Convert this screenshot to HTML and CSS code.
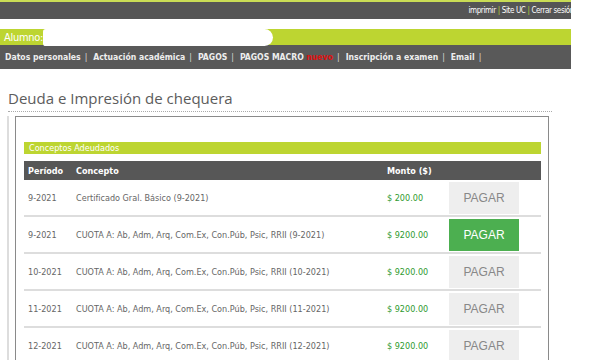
FILE: index.html
```html
<!DOCTYPE html>
<html lang="es">
<head>
<meta charset="utf-8">
<title>Deuda e Impresión de chequera</title>
<link rel="stylesheet" href="styles.css">
</head>
<body>
<div class="page">
  <div class="topbar">
    <a href="#">imprimir</a><span class="sep">|</span><a href="#">Site UC</a><span class="sep">|</span><a href="#">Cerrar sesión</a>
  </div>
  <div class="student">
    <span class="lbl">Alumno:</span><span class="name"></span>
  </div>
  <nav class="menu">
    <a href="#">Datos personales</a><span class="sep">|</span>
    <a href="#">Actuación académica</a><span class="sep">|</span>
    <a href="#">PAGOS</a><span class="sep">|</span>
    <a href="#">PAGOS MACRO <span class="new">nuevo</span></a><span class="sep">|</span>
    <a href="#">Inscripción a examen</a><span class="sep">|</span>
    <a href="#">Email</a><span class="sep">|</span>
  </nav>
  <h1 class="title">Deuda e Impresión de chequera</h1>
  <div class="outer">
    <div class="box">
      <div class="caption">Conceptos Adeudados</div>
      <table class="debt">
        <thead>
          <tr><th class="c-per">Período</th><th class="c-con">Concepto</th><th class="c-mon">Monto ($)</th><th class="c-btn"></th></tr>
        </thead>
        <tbody>
          <tr><td>9-2021</td><td>Certificado Gral. Básico (9-2021)</td><td class="amt">$ 200.00</td><td><span class="pay">PAGAR</span></td></tr>
          <tr><td>9-2021</td><td>CUOTA A: Ab, Adm, Arq, Com.Ex, Con.Púb, Psic, RRII (9-2021)</td><td class="amt">$ 9200.00</td><td><span class="pay active">PAGAR</span></td></tr>
          <tr><td>10-2021</td><td>CUOTA A: Ab, Adm, Arq, Com.Ex, Con.Púb, Psic, RRII (10-2021)</td><td class="amt">$ 9200.00</td><td><span class="pay">PAGAR</span></td></tr>
          <tr><td>11-2021</td><td>CUOTA A: Ab, Adm, Arq, Com.Ex, Con.Púb, Psic, RRII (11-2021)</td><td class="amt">$ 9200.00</td><td><span class="pay">PAGAR</span></td></tr>
          <tr><td>12-2021</td><td>CUOTA A: Ab, Adm, Arq, Com.Ex, Con.Púb, Psic, RRII (12-2021)</td><td class="amt">$ 9200.00</td><td><span class="pay">PAGAR</span></td></tr>
        </tbody>
      </table>
    </div>
  </div>
</div>
</body>
</html>
```

FILE: styles.css
```css
html, body {
  margin: 0;
  padding: 0;
  background: #fff;
}
.page {
  width: 571px;
  overflow: hidden;
  font-family: "DejaVu Sans Condensed", "DejaVu Sans", sans-serif;
}
.topbar {
  border-top: 2px solid #c9dc55;
  background: #555555;
  height: 17px;
  display: flex;
  justify-content: flex-end;
  align-items: center;
  white-space: nowrap;
  font-size: 8px;
  letter-spacing: -0.4px;
  margin-right: -3px;
}
.topbar a {
  color: #fff;
  text-decoration: none;
}
.topbar .sep {
  color: #bcd531;
  padding: 0 2px;
}
.student {
  margin-top: 10px;
  height: 16px;
  background: #bdd531;
  display: flex;
  align-items: center;
}
.student .lbl {
  color: #fff;
  font-size: 11px;
  letter-spacing: -0.3px;
  padding-left: 4px;
}
.student .name {
  display: block;
  width: 230px;
  height: 17px;
  background: #fff;
  border-radius: 3px 9px 9px 3px;
}
.menu {
  background: #595959;
  height: 24px;
  display: flex;
  align-items: center;
  padding-left: 5px;
  font-size: 8.6px;
  font-weight: bold;
  white-space: nowrap;
}
.menu a {
  color: #eee;
  text-decoration: none;
}
.menu .sep {
  color: #ddd;
  font-weight: normal;
  padding: 0 6px 0 4px;
}
.menu .new {
  color: #e01010;
}
.title {
  margin: 19px 19px 0 8px;
  padding-bottom: 3px;
  border-bottom: 1px dotted #aaa;
  font-family: "Open Sans", sans-serif;
  font-weight: normal;
  font-size: 15px;
  line-height: 20px;
  color: #5c5c5c;
}
.outer {
  margin: 4px 0 0 7px;
  border-left: 2px solid #ddd;
  padding-left: 6px;
}
.box {
  border: 1px solid #8a8a8a;
  border-bottom: 0;
  padding: 25px 7px 0 8px;
  box-sizing: border-box;
  width: 534px;
}
.caption {
  background: #bdd531;
  color: #fff;
  font-size: 9px;
  height: 12px;
  line-height: 12px;
  padding-left: 5px;
  margin-bottom: 7px;
}
.debt {
  width: 100%;
  border-collapse: collapse;
  font-size: 9px;
  color: #666;
}
.debt th {
  background: #575757;
  color: #fff;
  font-weight: bold;
  text-align: left;
  height: 19px;
  padding: 0;
}
.debt .c-per { width: 48px; padding-left: 4px; }
.debt .c-con { width: 311px; }
.debt .c-mon { width: 61px; }
.debt td {
  height: 35px;
  padding: 0;
  border-bottom: 2px solid #ddd;
}
.debt td:first-child {
  padding-left: 4px;
}
.debt .amt {
  color: #2f9a2f;
}
.pay {
  display: flex;
  align-items: center;
  justify-content: center;
  width: 70px;
  height: 32px;
  margin-left: 1px;
  background: #eeeeee;
  color: #888;
  font-family: "Liberation Sans", Arial, sans-serif;
  font-size: 12px;
}
.pay.active {
  background: #4caf50;
  color: #fff;
}
```
